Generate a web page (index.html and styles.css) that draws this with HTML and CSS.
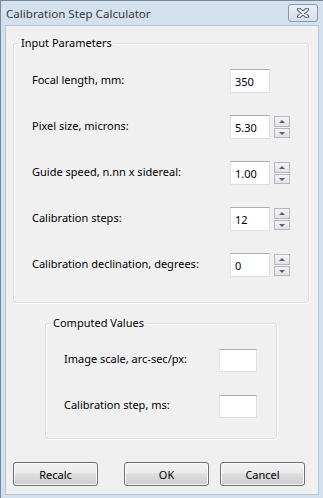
FILE: index.html
```html
<!DOCTYPE html>
<html lang="en">
<head>
  <meta charset="UTF-8" />
  <title>Calibration Step Calculator</title>
  <link rel="stylesheet" href="styles.css">
</head>
<body>

<div class="window">
  <div class="titlebar">
    <span class="title">Calibration Step Calculator</span>
    <button class="close-btn" aria-label="Close">
      <svg width="14" height="10" viewBox="0 0 14 10">
        <path d="M3 1.5 L11 8.5 M11 1.5 L3 8.5" stroke="#4a5566" stroke-width="4" stroke-linecap="round"/>
        <path d="M3 1.5 L11 8.5 M11 1.5 L3 8.5" stroke="#fff" stroke-width="2" stroke-linecap="round"/>
      </svg>
    </button>
  </div>

  <div class="client">
    <fieldset class="group inputs">
      <legend>Input Parameters</legend>

      <label>Focal length, mm:</label>
      <input type="text" value="350" />
      <span></span>

      <label>Pixel size, microns:</label>
      <input type="text" value="5.30" />
      <div class="spin"><button class="up"></button><button class="down"></button></div>

      <label>Guide speed, n.nn x sidereal:</label>
      <input type="text" value="1.00" />
      <div class="spin"><button class="up"></button><button class="down"></button></div>

      <label>Calibration steps:</label>
      <input type="text" value="12" />
      <div class="spin"><button class="up"></button><button class="down"></button></div>

      <label>Calibration declination, degrees:</label>
      <input type="text" value="0" />
      <div class="spin"><button class="up"></button><button class="down"></button></div>
    </fieldset>

    <fieldset class="group computed">
      <legend>Computed Values</legend>

      <label>Image scale, arc-sec/px:</label>
      <input type="text" value="" />

      <label>Calibration step, ms:</label>
      <input type="text" value="" />
    </fieldset>

    <div class="buttons">
      <button class="btn recalc">Recalc</button>
      <button class="btn ok">OK</button>
      <button class="btn cancel">Cancel</button>
    </div>
  </div>
</div>

</body>
</html>
```

FILE: styles.css
```css
body {
  margin: 0;
  font-family: "Noto Sans", "Open Sans", sans-serif;
  font-size: 11px;
  line-height: 16px;
  color: #000;
}
.window {
  width: 323px;
  height: 498px;
  box-sizing: border-box;
  background: #d3e0ee;
  border-top: 1px solid #7a8796;
  border-left: 1px solid #7a8796;
  padding: 0 4px 3px 4px;
  display: flex;
  flex-direction: column;
}
.titlebar {
  flex-shrink: 0;
  height: 24px;
  display: flex;
  align-items: flex-start;
  justify-content: space-between;
  padding-left: 1px;
  padding-right: 1px;
}
.title {
  color: #3b3b3b;
  font-size: 11.6px;
  margin-top: 5px;
}
.close-btn {
  width: 30px;
  height: 18px;
  margin-top: 3px;
  border: 1px solid #8a98ad;
  border-radius: 3px;
  background: linear-gradient(#e9eff6, #d5e0ec);
  display: flex;
  align-items: center;
  justify-content: center;
  padding: 0;
}
.client {
  flex: 1;
  min-height: 0;
  background: #f0f0f0;
  border: 1px solid #b7c6d6;
  display: flex;
  flex-direction: column;
  align-items: flex-start;
}
.group {
  border: 1px solid #d5dfe5;
  border-radius: 3px;
  box-shadow: inset 1px 1px 0 #fff, 1px 1px 0 #fff;
  margin: 0;
  display: grid;
  align-items: center;
}
.group legend {
  padding: 0 2px;
  margin-left: -13px;
  font-size: 11px;
  line-height: 16px;
}
.inputs {
  width: 296px;
  box-sizing: border-box;
  margin: 9px 0 0 7px;
  padding: 7px 0 14px 18px;
  grid-template-columns: 198px 44px 16px;
  grid-auto-rows: 46px;
}
.computed {
  width: 232px;
  box-sizing: border-box;
  margin: 12px 0 0 39px;
  padding: 6px 0 9px 18px;
  grid-template-columns: 155px 38px;
  grid-auto-rows: 46px;
}
label {
  padding-bottom: 3px;
}
input {
  box-sizing: border-box;
  height: 24px;
  border: 1px solid #dbdfe6;
  border-top-color: #abadb3;
  border-left-color: #e2e3ea;
  background: #fff;
  font-family: inherit;
  font-size: 11px;
  padding: 0 4px;
  outline: none;
}
.inputs input {
  width: 40px;
}
.computed input {
  width: 38px;
  height: 23px;
}
.spin {
  display: flex;
  flex-direction: column;
  gap: 1px;
  height: 22px;
}
.spin button {
  height: 11px;
  width: 16px;
  padding: 0;
  border: 1px solid #b9b9b9;
  background: linear-gradient(#f4f4f4, #e2e2e2);
  position: relative;
}
.spin button::after {
  content: "";
  position: absolute;
  left: 4px;
  width: 0;
  height: 0;
  border-left: 3.5px solid transparent;
  border-right: 3.5px solid transparent;
}
.spin .up::after {
  top: 3px;
  border-bottom: 3px solid #4e5f88;
}
.spin .down::after {
  top: 3px;
  border-top: 3px solid #4e5f88;
}
.buttons {
  display: flex;
  margin: 23px 0 0 7px;
}
.btn {
  width: 85px;
  height: 24px;
  border: 1px solid #707070;
  border-radius: 3px;
  background: linear-gradient(#f2f2f2 0%, #ebebeb 45%, #dddddd 50%, #cfcfcf 100%);
  box-shadow: inset 0 0 0 1px #fbfbfb;
  font-family: inherit;
  font-size: 11px;
  color: #000;
  padding: 0;
}
.ok {
  margin-left: 26px;
}
.cancel {
  margin-left: 11px;
}
```
